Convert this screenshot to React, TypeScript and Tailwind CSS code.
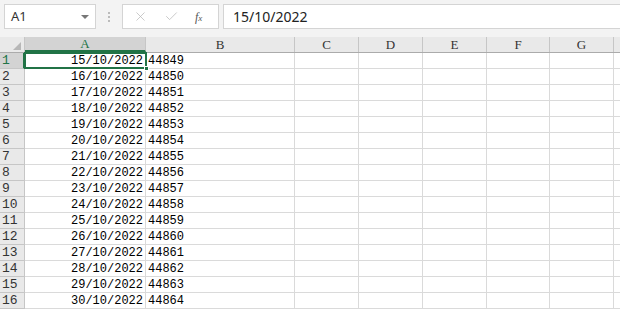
import { X, Check } from 'lucide-react';

const cols = [
  { label: 'A', w: 'w-[121px]' },
  { label: 'B', w: 'w-[149px]' },
  { label: 'C', w: 'w-[64px]' },
  { label: 'D', w: 'w-[64px]' },
  { label: 'E', w: 'w-[64px]' },
  { label: 'F', w: 'w-[63px]' },
  { label: 'G', w: 'w-[64px]' },
  { label: '', w: 'w-[40px]' },
];

const rows = Array.from({ length: 16 }, (_, i) => ({
  n: i + 1,
  date: `${String(15 + i).padStart(2, '0')}/10/2022`,
  serial: 44849 + i,
}));

const cellFont = { fontFamily: '"Liberation Mono", "Noto Sans CJK SC", monospace' };
const headFont = { fontFamily: '"Liberation Serif", "Noto Sans CJK SC", serif' };
const uiFont = { fontFamily: '"Noto Sans", "Liberation Sans", sans-serif' };

export default function App() {
  return (
    <div className="w-[620px] h-[309px] overflow-hidden bg-white">
      {/* Formula bar */}
      <div className="flex items-center h-[37px] bg-[#f3f3f3] pb-[4px] pl-[4px]" style={uiFont}>
        <div className="flex items-center justify-between w-[92px] h-[25px] bg-white border border-[#d4d4d4] pl-[6px] pr-[6px]">
          <span className="text-[13px] text-[#333]">A1</span>
          <span className="w-0 h-0 border-l-[4px] border-r-[4px] border-t-[4px] border-l-transparent border-r-transparent border-t-[#777]" />
        </div>
        <div className="flex flex-col gap-[2px] ml-[12px] mr-[12px]">
          <span className="w-[2px] h-[2px] bg-[#bbb]" />
          <span className="w-[2px] h-[2px] bg-[#bbb]" />
          <span className="w-[2px] h-[2px] bg-[#bbb]" />
        </div>
        <div className="flex items-center w-[97px] h-[25px] bg-white border border-[#d4d4d4] pl-[10px] gap-[16px]">
          <X size={15} strokeWidth={1.2} className="text-[#b8b8b8]" />
          <Check size={15} strokeWidth={1.2} className="text-[#b8b8b8]" />
          <span
            className="text-[12px] italic text-[#555]"
            style={{ fontFamily: '"Liberation Serif", serif' }}
          >
            f<span className="text-[9px]">x</span>
          </span>
        </div>
        <div className="flex items-center flex-1 h-[25px] bg-white border border-[#d4d4d4] border-r-0 ml-[4px] pl-[9px]">
          <span className="text-[14px] text-[#222]">15/10/2022</span>
        </div>
      </div>

      {/* Column headers */}
      <div className="flex h-[16px] bg-[#e9e9e9] border-b border-[#ababab]" style={headFont}>
        <div className="relative w-[25px] shrink-0 border-r border-[#c6c6c6]">
          <span
            className="absolute right-[3px] bottom-[2px] w-0 h-0"
            style={{ borderBottom: '8px solid #b7b7b7', borderLeft: '8px solid transparent' }}
          />
        </div>
        {cols.map((c) => (
          <div
            key={c.label || 'h'}
            className={`${c.w} shrink-0 flex items-center justify-center border-r border-[#c6c6c6] text-[13px] ${
              c.label === 'A' ? 'bg-[#d3d3d3] text-[#217346] border-b-2 border-b-[#217346]' : 'text-[#333]'
            }`}
          >
            {c.label}
          </div>
        ))}
      </div>

      {/* Grid */}
      <div className="relative" style={cellFont}>
        {rows.map((r) => (
          <div key={r.n} className="flex h-[16px]">
            <div
              className={`w-[25px] shrink-0 flex items-center pl-[2px] text-[13px] border-b border-r border-[#c6c6c6] ${
                r.n === 1 ? 'bg-[#d3d3d3] text-[#217346] border-r-2 border-r-[#217346]' : 'bg-[#e9e9e9] text-[#333]'
              }`}
            >
              {r.n}
            </div>
            {cols.map((c, ci) => (
              <div
                key={ci}
                className={`${c.w} shrink-0 flex items-center border-b border-r border-[#dadada] text-[12px] text-black ${
                  ci === 0 ? 'justify-end pr-[2px]' : 'pl-[2px]'
                }`}
              >
                {ci === 0 ? r.date : ci === 1 ? r.serial : ''}
              </div>
            ))}
          </div>
        ))}
        {/* Active cell */}
        <div className="absolute left-[24px] top-[-1px] w-[123px] h-[17px] border-2 border-[#217346] pointer-events-none" />
        <div className="absolute left-[144px] top-[13px] w-[5px] h-[5px] bg-[#217346] border border-white" />
      </div>
    </div>
  );
}
